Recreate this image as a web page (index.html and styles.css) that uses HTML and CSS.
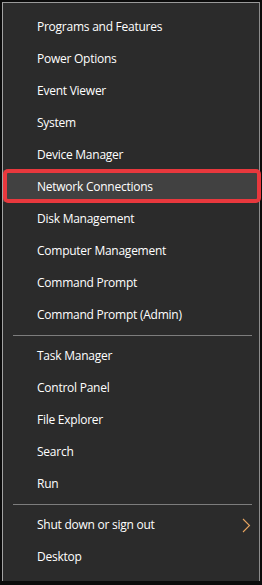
FILE: index.html
```html
<!DOCTYPE html>
<html lang="en">
<head>
<meta charset="utf-8">
<title>Quick Link Menu</title>
<link rel="stylesheet" href="styles.css">
</head>
<body>
<nav class="menu">
  <ul class="group">
    <li class="item">Programs and Features</li>
    <li class="item">Power Options</li>
    <li class="item">Event Viewer</li>
    <li class="item">System</li>
    <li class="item">Device Manager</li>
    <li class="item item-marked">Network Connections</li>
    <li class="item">Disk Management</li>
    <li class="item">Computer Management</li>
    <li class="item">Command Prompt</li>
    <li class="item">Command Prompt (Admin)</li>
  </ul>
  <div class="sep"></div>
  <ul class="group">
    <li class="item">Task Manager</li>
    <li class="item">Control Panel</li>
    <li class="item">File Explorer</li>
    <li class="item">Search</li>
    <li class="item">Run</li>
  </ul>
  <div class="sep"></div>
  <ul class="group">
    <li class="item item-sub">Shut down or sign out
      <svg class="chev" width="9" height="15" viewBox="0 0 9 15"><path d="M1 1 L7.5 7.5 L1 14" fill="none" stroke="#e6a460" stroke-width="1.1"/></svg>
    </li>
    <li class="item">Desktop</li>
  </ul>
</nav>
</body>
</html>
```

FILE: styles.css
```css
html, body {
  margin: 0;
  padding: 0;
  background: #0b0b0b;
}
body {
  width: 262px;
  height: 585px;
  font-family: "Open Sans", "Noto Sans", "Liberation Sans", sans-serif;
  font-size: 12px;
  color: #ffffff;
}
.menu {
  box-sizing: border-box;
  width: 258px;
  height: 579px;
  margin: 2px 0 0 2px;
  background: #2b2b2b;
  border-left: 1px solid #a3a3a3;
  border-top: 1px solid #9a9a9a;
  border-right: 1px solid #8c8c8c;
  padding: 7px 0 9px 0;
  display: flex;
  flex-direction: column;
}
.group {
  list-style: none;
  margin: 0;
  padding: 0;
}
.item {
  position: relative;
  height: 32px;
  display: flex;
  align-items: center;
  padding-left: 34px;
  letter-spacing: -0.25px;
}
.item-marked {
  background: #414141;
}
.item-marked::after {
  content: "";
  position: absolute;
  top: -1px;
  bottom: -1px;
  left: 0;
  right: -2px;
  border: 4px solid #e8383d;
  border-radius: 5px;
}
.item-sub .chev {
  position: absolute;
  right: 8px;
  top: 10px;
}
.sep {
  height: 1px;
  background: #7d7d7d;
  margin: 5px 7px 3px 10px;
}
```
